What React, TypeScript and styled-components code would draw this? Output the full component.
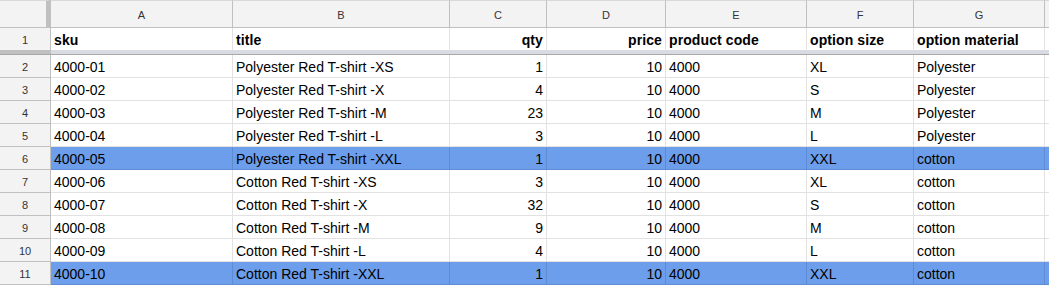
import styled, { createGlobalStyle } from "styled-components";

const GlobalStyle = createGlobalStyle`
  html, body {
    margin: 0;
    padding: 0;
    background: #ffffff;
    overflow: hidden;
  }
`;

type Align = "left" | "right";

const columns: { letter: string; width: number; align: Align }[] = [
  { letter: "A", width: 182, align: "left" },
  { letter: "B", width: 217, align: "left" },
  { letter: "C", width: 97, align: "right" },
  { letter: "D", width: 119, align: "right" },
  { letter: "E", width: 141, align: "left" },
  { letter: "F", width: 107, align: "left" },
  { letter: "G", width: 131, align: "left" },
];

const headings = ["sku", "title", "qty", "price", "product code", "option size", "option material"];

const rows: { values: string[]; selected?: boolean }[] = [
  { values: ["4000-01", "Polyester Red T-shirt -XS", "1", "10", "4000", "XL", "Polyester"] },
  { values: ["4000-02", "Polyester Red T-shirt -X", "4", "10", "4000", "S", "Polyester"] },
  { values: ["4000-03", "Polyester Red T-shirt -M", "23", "10", "4000", "M", "Polyester"] },
  { values: ["4000-04", "Polyester Red T-shirt -L", "3", "10", "4000", "L", "Polyester"] },
  { values: ["4000-05", "Polyester Red T-shirt -XXL", "1", "10", "4000", "XXL", "cotton"], selected: true },
  { values: ["4000-06", "Cotton Red T-shirt -XS", "3", "10", "4000", "XL", "cotton"] },
  { values: ["4000-07", "Cotton Red T-shirt -X", "32", "10", "4000", "S", "cotton"] },
  { values: ["4000-08", "Cotton Red T-shirt -M", "9", "10", "4000", "M", "cotton"] },
  { values: ["4000-09", "Cotton Red T-shirt -L", "4", "10", "4000", "L", "cotton"] },
  { values: ["4000-10", "Cotton Red T-shirt -XXL", "1", "10", "4000", "XXL", "cotton"], selected: true },
];

const Sheet = styled.div`
  display: grid;
  grid-template-columns: 51px ${columns.map((c) => `${c.width}px`).join(" ")} 1fr;
  grid-template-rows: 28px 22px 5px;
  grid-auto-rows: 23px;
  width: 1049px;
  font-family: "Liberation Sans", Arial, sans-serif;
  font-size: 14px;
  color: #000000;
`;

const Corner = styled.div`
  box-sizing: border-box;
  height: 28px;
  background: #f3f3f3;
  border-top: 1px solid #d9d9d9;
  border-bottom: 1px solid #c0c0c0;
  border-right: 5px solid #c0c0c0;
`;

const ColumnHeader = styled.div`
  box-sizing: border-box;
  height: 28px;
  display: flex;
  align-items: center;
  justify-content: center;
  background: #f3f3f3;
  border-top: 1px solid #d9d9d9;
  border-bottom: 1px solid #c0c0c0;
  border-right: 1px solid #c0c0c0;
  color: #333333;
  font-size: 11px;
  padding-top: 1px;
`;

const RowHeader = styled.div<{ $short?: boolean }>`
  box-sizing: border-box;
  height: ${(p) => (p.$short ? "22px" : "23px")};
  display: flex;
  align-items: center;
  justify-content: center;
  padding-top: 1px;
  background: #f3f3f3;
  border-right: 1px solid #c0c0c0;
  border-bottom: ${(p) => (p.$short ? "none" : "1px solid #c0c0c0")};
  color: #333333;
  font-size: 11px;
`;

const Cell = styled.div<{ $align?: Align; $bold?: boolean; $selected?: boolean; $short?: boolean }>`
  box-sizing: border-box;
  height: ${(p) => (p.$short ? "22px" : "23px")};
  display: flex;
  align-items: center;
  justify-content: ${(p) => (p.$align === "right" ? "flex-end" : "flex-start")};
  padding: 2px 3px 0;
  overflow: hidden;
  white-space: nowrap;
  background: ${(p) => (p.$selected ? "#6d9eeb" : "#ffffff")};
  border-right: 1px solid ${(p) => (p.$selected ? "#5f8bd4" : "#e2e2e2")};
  border-bottom: ${(p) => (p.$short ? "none" : `1px solid ${p.$selected ? "#5f8bd4" : "#e2e2e2"}`)};
  font-weight: ${(p) => (p.$bold ? 700 : 400)};
  letter-spacing: ${(p) => (p.$bold ? "0.1px" : "0")};
`;

const FreezeBar = styled.div<{ $header?: boolean }>`
  box-sizing: border-box;
  height: 5px;
  grid-column: ${(p) => (p.$header ? "1 / 2" : "2 / -1")};
  background: ${(p) => (p.$header ? "#c0c0c0" : "#d9dbe3")};
  border-bottom: 1px solid #a8a8a8;
`;

function Row({ index, values, selected }: { index: number; values: string[]; selected?: boolean }) {
  return (
    <>
      <RowHeader>{index}</RowHeader>
      {values.map((v, i) => (
        <Cell key={i} $align={columns[i].align} $selected={selected}>
          {v}
        </Cell>
      ))}
      <Cell $selected={selected} />
    </>
  );
}

export default function App() {
  return (
    <>
      <GlobalStyle />
      <Sheet>
        <Corner />
        {columns.map((c) => (
          <ColumnHeader key={c.letter}>{c.letter}</ColumnHeader>
        ))}
        <ColumnHeader />

        <RowHeader $short>1</RowHeader>
        {headings.map((h, i) => (
          <Cell key={h} $short $bold $align={columns[i].align}>
            {h}
          </Cell>
        ))}
        <Cell $short />

        <FreezeBar $header />
        <FreezeBar />

        {rows.map((row, r) => (
          <Row key={r} index={r + 2} values={row.values} selected={row.selected} />
        ))}
      </Sheet>
    </>
  );
}
